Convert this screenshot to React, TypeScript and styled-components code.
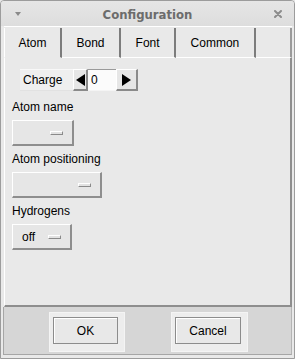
import React from "react";
import styled, { createGlobalStyle } from "styled-components";

const Global = createGlobalStyle`
  html, body { margin: 0; padding: 0; background: #e8e8e8; }
  body { font-family: "Liberation Sans", Arial, sans-serif; font-size: 12px; color: #000; }
  * { box-sizing: border-box; }
`;

const Window = styled.div`
  width: 295px;
  height: 359px;
  border: 1px solid #9c9c9c;
  border-radius: 4px 4px 0 0;
  background: #e9e9e9;
  display: flex;
  flex-direction: column;
  overflow: hidden;
`;

const TitleBar = styled.div`
  height: 25px;
  display: grid;
  grid-template-columns: 40px 1fr 40px;
  align-items: center;
  background: linear-gradient(#e6e6e6, #dddddd);
  color: #6c6c6c;
  font-family: "DejaVu Sans", sans-serif;
  font-weight: bold;
  font-size: 11.7px;
`;

const TitleText = styled.div`
  text-align: center;
  padding-top: 2px;
`;

const MenuArrow = styled.div`
  justify-self: start;
  margin-left: 14px;
  margin-top: 1px;
  width: 0;
  height: 0;
  border-left: 3.5px solid transparent;
  border-right: 3.5px solid transparent;
  border-top: 4px solid #8a8a8a;
`;

const CloseBox = styled.div`
  justify-self: end;
  margin-right: 12px;
  display: flex;
`;

const Content = styled.div`
  flex: 1;
  display: flex;
  flex-direction: column;
  padding: 0 2px 3px 2px;
`;

const TabBar = styled.div`
  display: flex;
  height: 32px;
  border-top: 1px solid #ffffff;
  margin-left: 1px;
`;

const Tab = styled.div<{ $active?: boolean }>`
  display: flex;
  align-items: center;
  justify-content: center;
  padding: ${(p) => (p.$active ? "1px 13.5px 0" : "1px 14.5px 0")};
  border-left: ${(p) => (p.$active ? "1px solid #ffffff" : "none")};
  border-right: 2px solid #7c7c7c;
  border-bottom: ${(p) => (p.$active ? "1px solid transparent" : "1px solid #ffffff")};
  margin-top: 1px;
  background: #e9e9e9;
`;

const TabFiller = styled.div`
  flex: 1;
  margin-top: 1px;
  border-bottom: 1px solid #ffffff;
  border-right: 2px solid #9a9a9a;
`;

const Panel = styled.div`
  flex: 1;
  margin-left: 1px;
  border-left: 1px solid #ffffff;
  border-right: 2px solid #8e8e8e;
  border-bottom: 2px solid #8e8e8e;
  padding: 11px 8px 0 7px;
  display: flex;
  flex-direction: column;
  align-items: flex-start;
`;

const Spinner = styled.div`
  display: flex;
  height: 22px;
  margin-left: 8px;
  margin-bottom: 8px;
`;

const SpinLabel = styled.div`
  display: flex;
  align-items: center;
  width: 53px;
  padding-left: 3px;
  background: #efefef;
  border-top: 1px solid #f8f8f8;
  border-bottom: 1px solid #e2e2e2;
`;

const ArrowBtn = styled.div<{ $w: number }>`
  width: ${(p) => p.$w}px;
  display: flex;
  align-items: center;
  justify-content: center;
  background: #e6e6e6;
  border-top: 1px solid #ffffff;
  border-left: 1px solid #ffffff;
  border-right: 2px solid #8a8a8a;
  border-bottom: 2px solid #8a8a8a;
`;

const Tri = styled.div<{ $dir: "left" | "right" }>`
  width: 0;
  height: 0;
  border-top: 6px solid transparent;
  border-bottom: 6px solid transparent;
  ${(p) => (p.$dir === "left" ? "border-right: 9px solid #000;" : "border-left: 9px solid #000;")}
`;

const SpinField = styled.div`
  width: 28px;
  display: flex;
  align-items: center;
  padding-left: 3px;
  background: #fbfbfb;
  border-top: 1px solid #9a9a9a;
  border-bottom: 1px solid #f4f4f4;
`;

const Label = styled.div`
  line-height: 14px;
  margin-top: 1px;
  margin-bottom: 6px;
`;

const Dropdown = styled.div<{ $w: number }>`
  width: ${(p) => p.$w}px;
  height: 26px;
  margin-bottom: 5px;
  display: flex;
  align-items: center;
  justify-content: space-between;
  padding: 0 9px 0 9px;
  background: #e6e6e6;
  border-top: 1px solid #ffffff;
  border-left: 1px solid #ffffff;
  border-right: 2px solid #8e8e8e;
  border-bottom: 2px solid #8e8e8e;
`;

const Indicator = styled.div`
  width: 13px;
  height: 4px;
  margin-left: auto;
  margin-top: 1px;
  background: #e2e2e2;
  border-top: 1px solid #ffffff;
  border-left: 1px solid #ffffff;
  border-bottom: 1px solid #8a8a8a;
  border-right: 1px solid #8a8a8a;
`;

const ButtonArea = styled.div`
  height: 48px;
  display: flex;
  justify-content: center;
  align-items: flex-start;
  gap: 46px;
  padding-top: 5px;
  padding-left: 2px;
  background: #d6d6d6;
  border-left: 1px solid #a6a6a6;
  border-right: 1px solid #b4b4b4;
  border-bottom: 1px solid #a6a6a6;
`;

const ButtonFrame = styled.div<{ $w: number }>`
  width: ${(p) => p.$w}px;
  height: 40px;
  padding: 4px 6px 7px 3px;
  background: #ededed;
  border: 1px solid #f4f4f4;
  display: flex;
`;

const Button = styled.div`
  flex: 1;
  display: flex;
  align-items: center;
  justify-content: center;
  background: #e8e8e8;
  border: 1px solid #8c8c8c;
  box-shadow: inset 1px 1px 0 #ffffff;
  padding-top: 1px;
`;

export default function App() {
  return (
    <>
      <Global />
      <Window>
        <TitleBar>
          <MenuArrow />
          <TitleText>Configuration</TitleText>
          <CloseBox>
            <svg width="8" height="8" viewBox="0 0 8 8">
              <path d="M1 1 L7 7 M7 1 L1 7" stroke="#8c8c8c" strokeWidth="2" strokeLinecap="round" />
            </svg>
          </CloseBox>
        </TitleBar>
        <Content>
          <TabBar>
            <Tab $active>Atom</Tab>
            <Tab>Bond</Tab>
            <Tab>Font</Tab>
            <Tab>Common</Tab>
            <TabFiller />
          </TabBar>
          <Panel>
            <Spinner>
              <SpinLabel>Charge</SpinLabel>
              <ArrowBtn $w={15}><Tri $dir="left" /></ArrowBtn>
              <SpinField>0</SpinField>
              <ArrowBtn $w={22}><Tri $dir="right" /></ArrowBtn>
            </Spinner>
            <Label>Atom name</Label>
            <Dropdown $w={62}><Indicator /></Dropdown>
            <Label>Atom positioning</Label>
            <Dropdown $w={90}><Indicator /></Dropdown>
            <Label>Hydrogens</Label>
            <Dropdown $w={60}>off<Indicator /></Dropdown>
          </Panel>
          <ButtonArea>
            <ButtonFrame $w={76}><Button>OK</Button></ButtonFrame>
            <ButtonFrame $w={77}><Button>Cancel</Button></ButtonFrame>
          </ButtonArea>
        </Content>
      </Window>
    </>
  );
}
